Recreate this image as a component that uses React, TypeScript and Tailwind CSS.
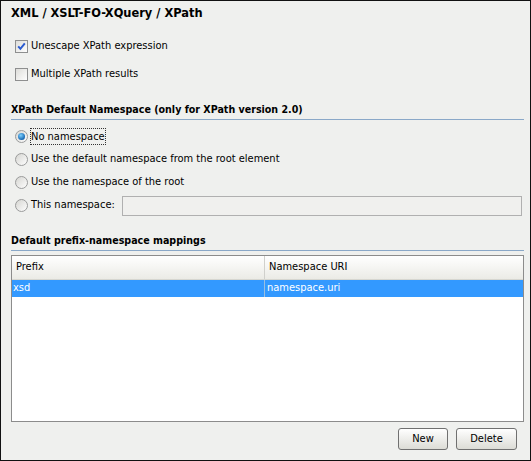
import React from 'react';

const font = { fontFamily: '"DejaVu Sans Condensed", "DejaVu Sans", Tahoma, sans-serif' };

const CheckBox = ({ checked }: { checked?: boolean }) => (
  <svg width="13" height="13" viewBox="0 0 13 13" className="shrink-0">
    <defs>
      <linearGradient id="cbg" x1="0" y1="0" x2="1" y2="1">
        <stop offset="0" stopColor="#dcdcd8" />
        <stop offset="1" stopColor="#ffffff" />
      </linearGradient>
    </defs>
    <rect x="0.5" y="0.5" width="12" height="12" fill="url(#cbg)" stroke="#8e8f8f" />
    {checked && <path d="M3.2 6.3 L5.4 8.8 L9.8 3.4" fill="none" stroke="#2a5bd0" strokeWidth="2" />}
  </svg>
);

const Radio = ({ checked }: { checked?: boolean }) => (
  <svg width="13" height="13" viewBox="0 0 13 13" className="shrink-0">
    <defs>
      <linearGradient id="rbg" x1="0" y1="0" x2="1" y2="1">
        <stop offset="0" stopColor="#d4d4d0" />
        <stop offset="1" stopColor="#ffffff" />
      </linearGradient>
      <radialGradient id="rdot" cx="0.4" cy="0.35" r="0.7">
        <stop offset="0" stopColor="#7cd0ff" />
        <stop offset="1" stopColor="#0a5aa8" />
      </radialGradient>
    </defs>
    <circle cx="6.5" cy="6.5" r="6" fill="url(#rbg)" stroke="#9a9b9b" />
    {checked && <circle cx="6.5" cy="6.5" r="3.5" fill="url(#rdot)" />}
  </svg>
);

const Heading = ({ children }: { children: React.ReactNode }) => (
  <div className="h-[20px] border-b border-[#8aa8c8] flex items-center text-[10.6px] font-bold text-black">
    {children}
  </div>
);

const App = () => {
  return (
    <div style={font} className="w-[531px] h-[461px] border border-[#111] bg-[#eff0ee] pl-[10px] pr-[6px] text-[11px] text-black">
      {/* Title */}
      <div className="h-[23px] flex items-center text-[12.7px] font-bold">XML / XSLT-FO-XQuery / XPath</div>

      {/* Checkboxes */}
      <div className="mt-[8px] pl-[4px]">
        <div className="h-[28px] flex items-center gap-[3px]">
          <CheckBox checked />
          <span>Unescape XPath expression</span>
        </div>
        <div className="h-[28px] flex items-center gap-[3px]">
          <CheckBox />
          <span>Multiple XPath results</span>
        </div>
      </div>

      {/* Namespace */}
      <div className="mt-[12px]">
        <Heading>XPath Default Namespace (only for XPath version 2.0)</Heading>
      </div>
      <div className="mt-[5px] pl-[4px]">
        <div className="h-[23px] flex items-center gap-[3px]">
          <Radio checked />
          <span className="outline outline-1 outline-dotted outline-[#333] leading-[15px]">No namespace</span>
        </div>
        <div className="h-[23px] flex items-center gap-[3px]">
          <Radio />
          <span>Use the default namespace from the root element</span>
        </div>
        <div className="h-[23px] flex items-center gap-[3px]">
          <Radio />
          <span>Use the namespace of the root</span>
        </div>
        <div className="h-[23px] flex items-center gap-[3px] pr-[2px]">
          <Radio />
          <span>This namespace:</span>
          <div className="ml-[4px] flex-1 h-[20px] border border-[#b0b0b0] bg-[#f0f0ee]" />
        </div>
      </div>

      {/* Mappings */}
      <div className="mt-[14px]">
        <Heading>Default prefix-namespace mappings</Heading>
      </div>
      <div className="mt-[4px] h-[167px] border border-[#8c8c8c] bg-white">
        <div className="flex h-[24px] bg-gradient-to-b from-white to-[#ebebe6] border-b border-[#d6d6d0]">
          <div className="w-[253px] border-r border-[#d0d0cc] flex items-center pl-[4px]">Prefix</div>
          <div className="flex-1 flex items-center pl-[4px]">Namespace URI</div>
        </div>
        <div className="flex h-[17px] bg-[#3399ff] text-white">
          <div className="w-[253px] border-r border-[#9abfe0] flex items-center pl-[1px]">xsd</div>
          <div className="flex-1 flex items-center pl-[2px]">namespace.uri</div>
        </div>
      </div>

      {/* Buttons */}
      <div className="mt-[6px] flex justify-end gap-[8px] pr-[7px]">
        <button className="w-[50px] h-[22px] border border-[#707070] rounded-[3px] bg-gradient-to-b from-white to-[#dcdcd6] text-[11px]">New</button>
        <button className="w-[61px] h-[22px] border border-[#707070] rounded-[3px] bg-gradient-to-b from-white to-[#dcdcd6] text-[11px]">Delete</button>
      </div>
    </div>
  );
};

export default App;
